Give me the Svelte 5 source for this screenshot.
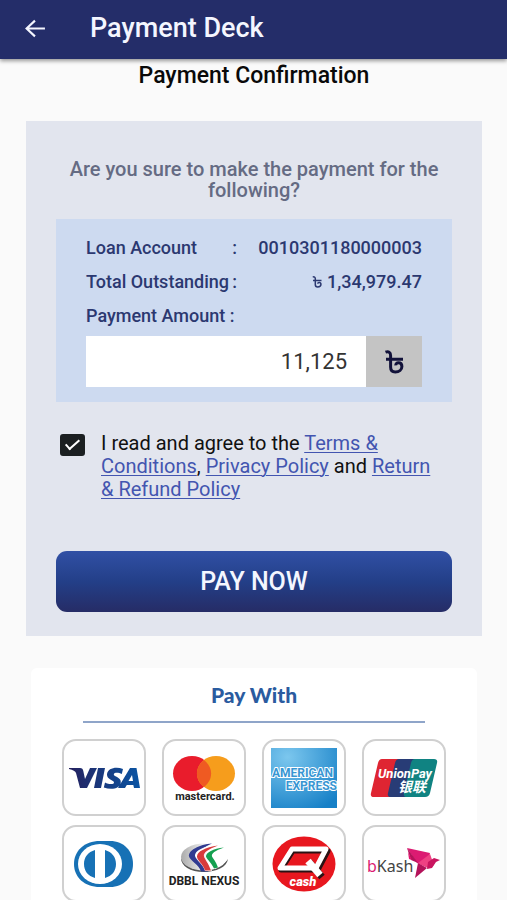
<script lang="ts">
  let amount = $state('11,125');
  let agreed = $state(true);

  const account = '0010301180000003';
  const outstanding = '1,34,979.47';
</script>

{#snippet taka(cls: string)}
  <svg class={cls} viewBox="0 0 20 24" role="img" aria-label="Taka">
    <path d="M1.500 2.200C4.500 1 6.600 2.200 6.600 5.500V17c0 3.400 1.800 5 4.700 5 4 0 6.600-2.400 6.600-5.400 0-2.400-1.600-3.800-3.500-3.800-1.700 0-2.700 1-2.600 2.600M2 9.200h17" />
  </svg>
{/snippet}

<header>
  <button class="back" aria-label="Back">
    <svg viewBox="0 0 20 18"><path d="M19 9H2M9.500 1.500L1.500 9l8 7.500" /></svg>
  </button>
  <h1>Payment Deck</h1>
</header>

<main>
  <h2>Payment Confirmation</h2>

  <form class="confirm" onsubmit={(e) => e.preventDefault()}>
    <p class="question">Are you sure to make the payment for the following?</p>

    <div class="details">
      <div class="row">
        <span class="name"><span>Loan Account</span><span>:</span></span>
        <span>{account}</span>
      </div>
      <div class="row">
        <span class="name"><span>Total Outstanding</span><span>:</span></span>
        <span class="money">{@render taka('taka-sm')}{outstanding}</span>
      </div>
      <label class="row" for="amount">Payment Amount :</label>
      <div class="amount">
        <input id="amount" type="text" inputmode="decimal" bind:value={amount} />
        <span class="unit">{@render taka('taka-lg')}</span>
      </div>
    </div>

    <div class="terms">
      <input id="agree" type="checkbox" bind:checked={agreed} />
      <label for="agree">
        I read and agree to the <a href="#terms">Terms &amp; Conditions</a>, <a href="#privacy">Privacy Policy</a> and <a href="#refund">Return &amp; Refund Policy</a>
      </label>
    </div>

    <button class="pay" type="submit">PAY NOW</button>
  </form>

  <section class="methods">
    <h3>Pay With</h3>
    <div class="grid">
      <button aria-label="Visa">
        <svg viewBox="0 0 84 76">
          <defs>
            <linearGradient id="visa" x1="0" x2="1">
              <stop offset="0" stop-color="#25215e" />
              <stop offset="1" stop-color="#0a55a4" />
            </linearGradient>
          </defs>
          <path fill="url(#visa)" d="M7 28h11c2 0 3 1 3.300 3l1.700 8 5-11h7L25 48h-7l-4-15c-.5-2-3-3-7-4zM36 28h7l-4 20h-7zM61 29l-1.200 5c-3-1.500-8-1.800-8 .4 0 2.200 7.500 2.600 7 7.800-.6 6.500-9.500 8-17 5.200l1.200-5c3.500 2 9 2.500 9 0 0-2.300-7.500-2.600-7-8.100.6-6.500 9.500-8 16-5.300zM68 28h6.500L78 48h-6l-.7-3h-6.500L63 48h-7zm2 7l-3.500 6h4.500z" />
        </svg>
      </button>
      <button aria-label="Mastercard">
        <svg viewBox="0 0 84 76">
          <ellipse cx="30" cy="33.500" rx="19" ry="17.500" fill="#e91c2c" />
          <ellipse cx="54" cy="33.500" rx="19" ry="17.500" fill="#f69d1c" />
          <path d="M42 20c9.500 7.500 9.500 19.500 0 27c-9.500-7.500-9.500-19.500 0-27z" fill="#ef5a22" />
          <text x="43" y="60" text-anchor="middle" font-size="11" font-weight="700" fill="#222">mastercard.</text>
        </svg>
      </button>
      <button aria-label="American Express">
        <svg viewBox="0 0 84 76">
          <defs>
            <radialGradient id="amex" cx=".25" cy=".15" r="1">
              <stop offset="0" stop-color="#7cc7ee" />
              <stop offset="1" stop-color="#1680c7" />
            </radialGradient>
          </defs>
          <rect x="9" y="8" width="66" height="60" fill="url(#amex)" />
          <g class="outlined" font-size="12" font-weight="700">
            <text x="10" y="37">AMERICAN</text>
            <text x="75" y="50" text-anchor="end">EXPRESS</text>
          </g>
        </svg>
      </button>
      <button aria-label="UnionPay">
        <svg viewBox="0 0 84 76">
          <path d="M20 19h22l-9 38H12q-4 0-3-4l7-30q1-4 4-4z" fill="#df2532" />
          <path d="M37 19h22l-9 38H29q-4 0-3-4l7-30q1-4 4-4z" fill="#283c76" />
          <path d="M53 19h19q4 0 3 4l-7 30q-1 4-5 4H45q-4 0-3-4l7-30q1-4 4-4z" fill="#108382" />
          <g fill="#fff" font-style="italic" font-weight="700">
            <text x="16" y="38" font-size="13">UnionPay</text>
            <text class="cjk" x="36" y="52" font-size="14">银联</text>
          </g>
        </svg>
      </button>
      <button aria-label="Diners Club">
        <svg viewBox="0 0 84 76">
          <path d="M38 15h10c14 0 23 10 23 23S62 61 48 61H38C22 61 12 51 12 38s10-23 26-23z" fill="#1771b5" />
          <ellipse cx="38" cy="38" rx="22" ry="20" fill="#fff" />
          <path d="M33 24v28c-7-2-11-7-11-14s4-12 11-14zM43 24c7 2 11 7 11 14s-4 12-11 14z" fill="#1771b5" />
        </svg>
      </button>
      <button aria-label="DBBL Nexus">
        <svg viewBox="0 0 84 76">
          <defs>
            <linearGradient id="nexus" x1="0" x2="1">
              <stop offset="0" stop-color="#aaa" />
              <stop offset=".6" stop-color="#fff" />
            </linearGradient>
          </defs>
          <path d="M66 33c-1 8-12 13-24 13-14 0-23-6-23-14 4 8 12 11 23 11s20-4 24-10z" fill="#555" />
          <ellipse cx="42" cy="31" rx="23" ry="13.500" fill="url(#nexus)" />
          <path d="M50 17.500c-9 4-14 8-13 12 1 3 7 7 9 16h-7c-2-7-11-11-12-15-1-6 10-12 23-13z" fill="#313b91" />
          <path d="M55 18.500c-9 4-14 8-13 12 1 3 5 6 8 14.500h-7c-2-7-9-11-10-15-1-5 9-10 22-11.500z" fill="#fff" />
          <path d="M56 19.500c-10 4-15 7-14 11 1 3 4 6 7 14h-6c-2-7-8-10-8-14 0-5 8-9 21-11z" fill="#d73b3c" />
          <path d="M62 21.500c-9 3-13 6-12 9 1 2 4 5 6 11l-4 1c-2-5-7-9-8-12 0-4 7-8 18-9z" fill="#15a050" />
          <text x="42" y="59" text-anchor="middle" font-size="12" font-weight="700" fill="#222">DBBL NEXUS</text>
        </svg>
      </button>
      <button aria-label="Q Cash">
        <svg viewBox="0 0 84 76">
          <ellipse cx="42" cy="38" rx="31.500" ry="27.500" fill="#e8171f" />
          <g fill="none" stroke-width="5" stroke-linejoin="round">
            <path d="M31 25h35l-10 19H19z" stroke="#2a1214" />
            <path d="M47 36l13 15" stroke="#2a1214" stroke-width="7" />
            <path d="M30 23h34L54 42H18z" stroke="#fff" />
            <path d="M46 35l12 14" stroke="#fff" stroke-width="7" />
          </g>
          <text x="41" y="60" text-anchor="middle" font-size="13" font-weight="900" font-style="italic" fill="#fff">cash</text>
        </svg>
      </button>
      <button aria-label="bKash">
        <svg viewBox="0 0 84 76">
          <text class="kash" x="5" y="46" font-size="16" fill="#444"><tspan fill="#dc1b72">b</tspan>Kash</text>
          <path d="M45 22l23 5-4 14-9-4z" fill="#dc1b72" />
          <path d="M45 22l11 15-7-3z" fill="#b4125a" />
          <path d="M46 26l4 8-3-1z" fill="#e2136e" />
          <path d="M56 37l9 5-12 10z" fill="#b4125a" />
          <path d="M56 37l12-9 4 11-6 3z" fill="#ef4183" />
          <path d="M66 36l6-4 6 2-4 2-4 6-5 1z" fill="#c9145f" />
        </svg>
      </button>
    </div>
  </section>
</main>

<style>
  :global(body) {
    margin: 0;
    background: #fafafa;
    font-family: Roboto, "Liberation Sans", sans-serif;
  }
  button, input {
    font-family: inherit;
    margin: 0;
  }
  header {
    height: 59px;
    padding: 0 25px 3px;
    display: flex;
    align-items: center;
    gap: 44px;
    box-sizing: border-box;
    background: #242d69;
    box-shadow: 0 2px 4px rgba(0, 0, 0, 0.4);
  }
  .back {
    padding: 0;
    border: 0;
    background: none;
    display: flex;
  }
  .back svg {
    width: 21px;
    height: 19px;
    fill: none;
    stroke: #f4f6ff;
    stroke-width: 2;
  }
  h1 {
    margin: 0;
    color: #f4f6ff;
    font-size: 27px;
    font-weight: 500;
  }
  main {
    padding: 0 25px 0 26px;
  }
  h2 {
    margin: 0;
    padding: 4px 0 32px;
    font-size: 23px;
    line-height: 26px;
    font-weight: 500;
    text-align: center;
    color: #090909;
  }
  .confirm {
    padding: 38px 30px 24px;
    background: #e2e5ee;
  }
  .question {
    margin: 0 0 18px;
    font-size: 20px;
    line-height: 21px;
    font-weight: 500;
    text-align: center;
    color: #656b83;
  }
  .details {
    padding: 12px 30px 15px;
    background: #cddaf0;
    color: #2b3870;
    font-size: 18px;
    font-weight: 500;
  }
  .row {
    display: flex;
    justify-content: space-between;
    height: 34px;
    line-height: 34px;
  }
  .name {
    display: flex;
    justify-content: space-between;
    width: 151px;
  }
  .money {
    display: flex;
    align-items: center;
    gap: 5px;
  }
  .taka-sm, .taka-lg {
    fill: none;
    stroke: currentColor;
    stroke-width: 3;
  }
  .taka-sm {
    width: 10px;
    height: 12px;
  }
  .taka-lg {
    width: 20px;
    height: 24px;
    color: #12123a;
  }
  .amount {
    display: flex;
    height: 51px;
    margin-top: 3px;
  }
  .amount input {
    flex: 1;
    min-width: 0;
    padding: 0 19px;
    border: 0;
    background: #fff;
    color: #333;
    font-size: 22px;
    text-align: right;
  }
  .unit {
    width: 56px;
    display: flex;
    align-items: center;
    justify-content: center;
    background: #c4c4c4;
  }
  .terms {
    display: flex;
    align-items: flex-start;
    gap: 16px;
    margin: 30px 0 50px;
    padding: 0 16px 0 4px;
    font-size: 20px;
    line-height: 23px;
    color: #111;
  }
  .terms input {
    appearance: none;
    flex: none;
    width: 25px;
    height: 22px;
    margin-top: 2px;
    border: 2px solid #1b1f21;
    border-radius: 3px;
    position: relative;
  }
  .terms input:checked {
    background: #1b1f21;
  }
  .terms input:checked::after {
    content: "";
    position: absolute;
    left: 7px;
    top: 0;
    width: 5px;
    height: 12px;
    border: solid #fff;
    border-width: 0 2px 2px 0;
    transform: rotate(48deg);
  }
  a {
    color: #4355b0;
    text-decoration-thickness: 1px;
    text-underline-offset: 2px;
  }
  .pay {
    display: block;
    width: 100%;
    height: 61px;
    border: 0;
    border-radius: 11px;
    background: linear-gradient(#3150a5, #233f88 50%, #262c66);
    color: #f4f6ff;
    font-size: 25px;
    font-weight: 500;
  }
  .methods {
    margin: 32px 5px 0;
    padding: 14px 31px 24px;
    border-radius: 6px;
    background: #fff;
  }
  h3 {
    margin: 0 21px 16px;
    padding-bottom: 13px;
    border-bottom: 2px solid #8fa5c9;
    font-family: Lato, sans-serif;
    font-size: 21px;
    line-height: 26px;
    font-weight: 900;
    text-align: center;
    color: #2a5b9f;
  }
  .grid {
    display: grid;
    grid-template-columns: repeat(4, 1fr);
    gap: 9px 16px;
  }
  .grid button {
    padding: 0;
    border: 2px solid #d0d0d0;
    border-radius: 14px;
    background: #fff;
    height: 77px;
    overflow: hidden;
    display: flex;
    align-items: center;
    justify-content: center;
  }
  .grid svg {
    flex: none;
    width: 84px;
    height: 76px;
  }
  .outlined {
    fill: #3796d3;
    stroke: #fff;
    stroke-width: 2;
    paint-order: stroke;
  }
  .cjk {
    font-family: "Noto Sans CJK SC", sans-serif;
  }
  .kash {
    font-family: "Noto Sans", sans-serif;
  }
</style>
